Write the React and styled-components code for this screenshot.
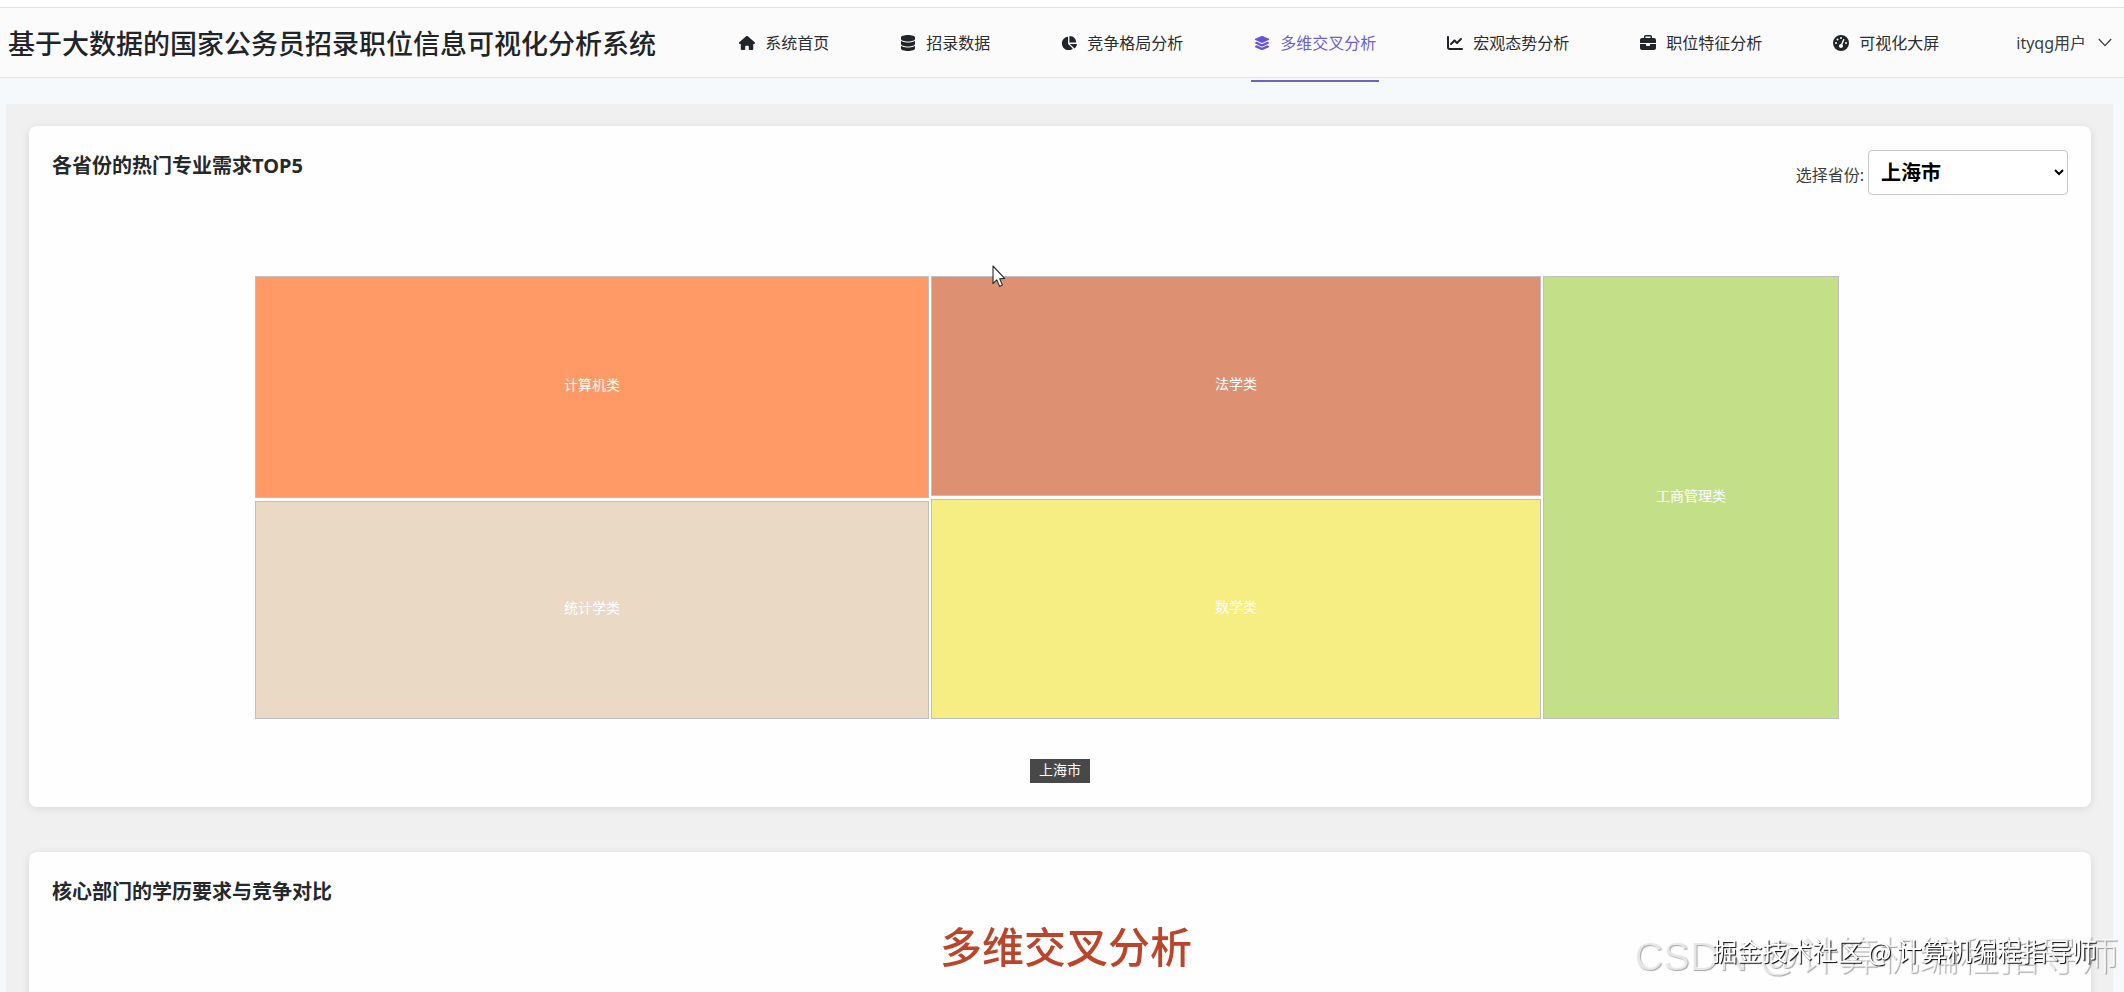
import React, { useState } from 'react';
import styled, { createGlobalStyle } from 'styled-components';
import {
  FaHouse,
  FaDatabase,
  FaChartPie,
  FaLayerGroup,
  FaChartLine,
  FaBriefcase,
  FaGaugeHigh,
} from 'react-icons/fa6';

const GlobalStyle = createGlobalStyle`
  * { box-sizing: border-box; }
  body {
    margin: 0;
    background: #f5f9fb;
    color: #212529;
    font-family: "Noto Sans", "Noto Sans CJK SC", sans-serif;
    font-size: 16px;
  }
`;

const Shell = styled.div`
  display: flex;
  flex-direction: column;
  height: 100vh;
  overflow: hidden;
`;

const TopStrip = styled.div`
  flex: none;
  height: 7px;
  background: #ffffff;
`;

const Header = styled.header`
  flex: none;
  display: flex;
  align-items: center;
  justify-content: space-between;
  height: 71px;
  padding: 0 12px 0 8px;
  border-top: 1px solid #dfe1e2;
  border-bottom: 1px solid #e3e6e6;
  background: #fbfbfb;
`;

const Brand = styled.h1`
  margin: 0;
  font-family: KaiTi, STKaiti, "Noto Sans CJK SC", sans-serif;
  font-size: 27px;
  font-weight: 500;
  line-height: 36px;
  white-space: nowrap;
  color: #212529;
`;

const Nav = styled.nav`
  display: flex;
  align-items: center;
  gap: 65px;
`;

const NavLink = styled.a`
  display: flex;
  align-items: center;
  gap: 10px;
  height: 78px;
  padding: 0 3px;
  border-top: 2px solid transparent;
  border-bottom: 2px solid ${(p) => (p.$active ? '#6f63c0' : 'transparent')};
  color: ${(p) => (p.$active ? '#6c5fd6' : '#2b2e31')};
  line-height: 24px;
  text-decoration: none;
  white-space: nowrap;

  svg {
    width: auto;
    height: 16px;
    color: ${(p) => (p.$active ? '#6553e0' : '#212529')};
  }
`;

const UserButton = styled.button`
  display: flex;
  align-items: center;
  gap: 12px;
  margin-left: 9px;
  padding: 0;
  border: 0;
  background: none;
  color: #3a3d40;
  font: inherit;
  line-height: 24px;
  cursor: pointer;
`;

const Panel = styled.main`
  flex: 1;
  display: flex;
  flex-direction: column;
  gap: 45px;
  min-height: 0;
  margin: 26px 11px 0 6px;
  padding: 22px 22px 22px 23px;
  overflow-y: auto;
  scrollbar-width: none;
  background: #f0f0f0;
`;

const Card = styled.section`
  flex: none;
  display: flex;
  flex-direction: column;
  min-height: ${(p) => p.$minHeight || 0}px;
  padding: 24px 23px;
  border-radius: 8px;
  background: #fefefe;
  box-shadow: 0 2px 10px rgba(0, 0, 0, 0.09);
`;

const CardHead = styled.div`
  display: flex;
  align-items: flex-start;
  justify-content: space-between;
`;

const CardTitle = styled.h2`
  margin: 0;
  font-size: 20px;
  font-weight: 700;
  line-height: 32px;
  color: #24292e;
`;

const Filter = styled.div`
  display: flex;
  align-items: center;
  gap: 4px;
`;

const FilterLabel = styled.label`
  padding-top: 4px;
  line-height: 24px;
  color: #3a3d40;
`;

const ProvinceSelect = styled.select`
  width: 200px;
  height: 45px;
  padding: 0 0 0 8px;
  border: 1px solid #c6c8ca;
  border-radius: 4px;
  background: #ffffff;
  color: #000000;
  font-family: inherit;
  font-size: 20px;
  font-weight: 700;
`;

const Treemap = styled.div`
  display: flex;
  gap: 2px;
  height: 443px;
  margin: 81px 229px 40px 203px;
`;

const TreemapColumn = styled.div`
  flex: ${(p) => p.$weight} 1 0;
  display: flex;
  flex-direction: column;
  gap: 3px;
`;

const TreemapCell = styled.div`
  flex: ${(p) => p.$weight} 1 0;
  display: flex;
  align-items: center;
  justify-content: center;
  padding-bottom: 4px;
  border: 1px solid #bfbfbf;
  background: ${(p) => p.$color};
  color: #ffffff;
  font-size: 14px;
  line-height: 20px;
`;

const Crumb = styled.button`
  align-self: center;
  height: 24px;
  padding: 0 9px 2px;
  border: 0;
  background: #484848;
  color: #ffffff;
  font-family: inherit;
  font-size: 14px;
  line-height: 22px;
  cursor: pointer;
`;

const Pointer = styled.svg`
  position: fixed;
  left: 992px;
  top: 265px;
  width: 15px;
  height: 24px;
  pointer-events: none;
`;

const Caption = styled.p`
  position: fixed;
  left: calc(50% - 122px);
  bottom: 15px;
  margin: 0;
  color: #bb452b;
  font-size: 42px;
  font-weight: 500;
  line-height: 60px;
  white-space: nowrap;
  pointer-events: none;
`;

const Watermark = styled.p`
  position: fixed;
  margin: 0;
  white-space: nowrap;
  pointer-events: none;
`;

const WideWatermark = styled(Watermark)`
  right: 5px;
  bottom: 6px;
  color: rgba(255, 255, 255, 0.7);
  font-family: "Liberation Sans", "Noto Sans CJK SC", sans-serif;
  font-size: 40px;
  font-weight: 300;
  line-height: 60px;
  text-shadow: 1px 1px 1px rgba(0, 0, 0, 0.35);
`;

const SmallWatermark = styled(Watermark)`
  right: 27px;
  bottom: 24px;
  color: #ffffff;
  font-family: "Noto Sans CJK SC", sans-serif;
  font-size: 25px;
  line-height: 36px;
  text-shadow: 1px 1px 1px #000000;
`;

const navItems = [
  { label: '系统首页', Icon: FaHouse },
  { label: '招录数据', Icon: FaDatabase },
  { label: '竞争格局分析', Icon: FaChartPie },
  { label: '多维交叉分析', Icon: FaLayerGroup, active: true },
  { label: '宏观态势分析', Icon: FaChartLine },
  { label: '职位特征分析', Icon: FaBriefcase },
  { label: '可视化大屏', Icon: FaGaugeHigh },
];

const columns = [
  {
    weight: 674,
    cells: [
      { name: '计算机类', color: '#ff9a66', weight: 222 },
      { name: '统计学类', color: '#ead9c5', weight: 218 },
    ],
  },
  {
    weight: 610,
    cells: [
      { name: '法学类', color: '#dd9072', weight: 220 },
      { name: '数学类', color: '#f6ed83', weight: 220 },
    ],
  },
  {
    weight: 296,
    cells: [{ name: '工商管理类', color: '#c3df88', weight: 1 }],
  },
];

export default function App() {
  const [province, setProvince] = useState('上海市');

  return (
    <>
      <GlobalStyle />
      <Shell>
        <TopStrip />
        <Header>
          <Brand>基于大数据的国家公务员招录职位信息可视化分析系统</Brand>
          <Nav>
            {navItems.map(({ label, Icon, active }) => (
              <NavLink key={label} href="#" $active={active} aria-current={active ? 'page' : undefined}>
                <Icon aria-hidden="true" />
                {label}
              </NavLink>
            ))}
            <UserButton type="button">
              ityqg用户
              <svg width="14" height="9" viewBox="0 0 14 9" fill="none" stroke="currentColor" strokeWidth="1.3" aria-hidden="true">
                <path d="M0.8 1 L7 7.6 L13.2 1" />
              </svg>
            </UserButton>
          </Nav>
        </Header>

        <Panel>
          <Card>
            <CardHead>
              <CardTitle>各省份的热门专业需求TOP5</CardTitle>
              <Filter>
                <FilterLabel htmlFor="province">选择省份:</FilterLabel>
                <ProvinceSelect id="province" value={province} onChange={(e) => setProvince(e.target.value)}>
                  <option>上海市</option>
                </ProvinceSelect>
              </Filter>
            </CardHead>
            <Treemap>
              {columns.map((column) => (
                <TreemapColumn key={column.weight} $weight={column.weight}>
                  {column.cells.map((cell) => (
                    <TreemapCell key={cell.name} $weight={cell.weight} $color={cell.color}>
                      {cell.name}
                    </TreemapCell>
                  ))}
                </TreemapColumn>
              ))}
            </Treemap>
            <Crumb type="button">{province}</Crumb>
          </Card>

          <Card $minHeight={680}>
            <CardHead>
              <CardTitle>核心部门的学历要求与竞争对比</CardTitle>
            </CardHead>
          </Card>
        </Panel>
      </Shell>

      <Caption>多维交叉分析</Caption>
      <WideWatermark>CSDN @计算机编程指导师</WideWatermark>
      <SmallWatermark>掘金技术社区 @ 计算机编程指导师</SmallWatermark>
      <Pointer viewBox="0 0 15 24" aria-hidden="true">
        <path
          d="M1 1 V18.5 L4.8 14.9 L7.6 21.4 L10.4 20.1 L7.7 13.8 L12.6 13.4 Z"
          fill="#ffffff"
          stroke="#2b2b2b"
          strokeWidth="1.1"
          strokeLinejoin="round"
        />
      </Pointer>
    </>
  );
}
